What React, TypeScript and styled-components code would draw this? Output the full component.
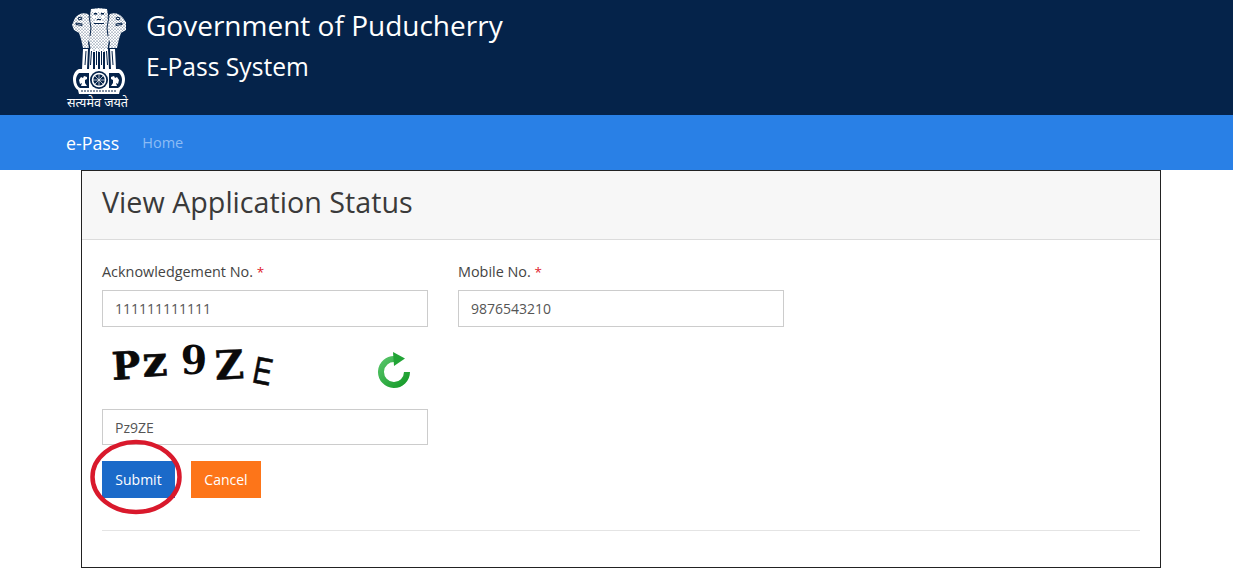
import React from "react";
import styled, { createGlobalStyle } from "styled-components";

const Global = createGlobalStyle`
  html, body { margin: 0; padding: 0; background: #fff; overflow: hidden; }
  body { font-family: "Open Sans", "Noto Sans", "Liberation Sans", sans-serif; color: #333; }
  * { box-sizing: border-box; }
`;

const Masthead = styled.header`
  height: 115px;
  background: #05234a;
  display: flex;
  padding-left: 66px;
  gap: 17px;
  color: #fff;
`;
const Emblem = styled.div`
  width: 63px;
  display: flex;
  flex-direction: column;
  align-items: center;
  padding-top: 7px;
`;
const EmblemSvg = styled.svg`
  margin-left: 3px;
  flex: none;
`;
const Motto = styled.span`
  font-family: "Noto Sans Devanagari", "Noto Sans", "DejaVu Sans", sans-serif;
  font-size: 12.6px;
  line-height: 14px;
  white-space: nowrap;
  color: #fff;
  font-weight: 400;
`;
const Titles = styled.div`
  display: flex;
  flex-direction: column;
  padding-top: 6px;
`;
const Title = styled.h1`
  margin: 0;
  font-size: 28px;
  line-height: 38px;
  font-weight: 400;
`;
const Subtitle = styled.h2`
  margin: 7px 0 0;
  font-size: 24.6px;
  line-height: 32px;
  font-weight: 400;
`;
const NavBar = styled.nav`
  height: 55px;
  background: #2980e6;
  display: flex;
  align-items: center;
  padding-left: 66px;
  gap: 23px;
`;
const Brand = styled.span`
  font-size: 17.8px;
  color: #fff;
`;
const NavLink = styled.span`
  font-size: 14.5px;
  margin-top: -1px;
  color: #8cbcf5;
`;
const Card = styled.section`
  position: relative;
  width: 1080px;
  height: 398px;
  margin-left: 81px;
  border: 1px solid #222;
`;
const CardHeader = styled.div`
  height: 69px;
  background: #f7f7f7;
  border-bottom: 1px solid #dcdcdc;
  padding: 0 20px;
  display: flex;
  align-items: center;
`;
const CardTitle = styled.h3`
  margin: 0 0 7px;
  font-size: 28.7px;
  font-weight: 400;
  color: #3a3a3a;
`;
const CardBody = styled.div`
  padding: 21px 20px 0;
`;
const FieldRow = styled.div`
  display: flex;
  gap: 30px;
`;
const Field = styled.div`
  width: 326px;
  display: flex;
  flex-direction: column;
`;
const Label = styled.label`
  font-size: 14.4px;
  line-height: 22px;
  height: 29px;
  color: #444;
`;
const Star = styled.span`
  color: #e0202c;
  font-size: 13.5px;
`;
const Input = styled.div<{ $h?: number }>`
  height: ${(p) => p.$h ?? 37}px;
  width: 326px;
  border: 1px solid #ccc;
  padding: 0 12px;
  font-size: 14px;
  line-height: 35px;
  color: #555;
`;
const CaptchaRow = styled.div`
  width: 326px;
  height: 82px;
  display: flex;
  justify-content: space-between;
  align-items: flex-start;
  padding: 16px 18px 0 10px;
`;
const Captcha = styled.div`
  width: 180px;
  height: 48px;
  display: flex;
  color: #0a0a0a;
  font-family: "DejaVu Serif", "Liberation Serif", serif;
  font-weight: 700;
`;
const CaptchaChar = styled.span<{ $size: number; $top: number; $left: number; $rot: number; $sx?: number; $plain?: boolean; $stroke?: number }>`
  display: block;
  font-size: ${(p) => p.$size}px;
  line-height: 1;
  margin-top: ${(p) => p.$top}px;
  margin-left: ${(p) => p.$left}px;
  transform: rotate(${(p) => p.$rot}deg) scaleX(${(p) => p.$sx ?? 1});
  -webkit-text-stroke: ${(p) => p.$stroke ?? 0}px #0a0a0a;
  ${(p) => (p.$plain ? `font-family: "Liberation Sans", sans-serif; font-weight: 400;` : "")}
`;
const RefreshSvg = styled.svg`
  margin-top: 9px;
  flex: none;
`;
const Buttons = styled.div`
  display: flex;
  gap: 16px;
  margin-top: 16px;
`;
const Button = styled.button<{ $bg: string; $w: number }>`
  height: 37px;
  width: ${(p) => p.$w}px;
  padding: 0;
  border: 0;
  border-radius: 0;
  background: ${(p) => p.$bg};
  color: #fff;
  font: inherit;
  font-size: 14px;
`;
const Rule = styled.hr`
  margin: 32px 0 0;
  border: 0;
  border-top: 1px solid #e4e4e4;
`;
const Circle = styled.svg`
  position: absolute;
  left: 5px;
  top: 267px;
`;

const EmblemArt = () => (
  <EmblemSvg width="54" height="90" viewBox="0 0 54 90" fill="none">
    <defs>
      <pattern id="mane" width="3" height="3" patternUnits="userSpaceOnUse">
        <rect width="3" height="3" fill="#fff" />
        <circle cx="1" cy="1" r=".55" fill="#05234a" />
        <circle cx="2.500" cy="2.400" r=".4" fill="#05234a" />
      </pattern>
    </defs>
    <path d="M3 11c3-4 8-6 13-4l3 5 1 9-2 8-2 7 1 5H11l-2-9-2-6-5-3-2-5z" fill="url(#mane)" />
    <path d="M51 11c-3-4-8-6-13-4l-3 5-1 9 2 8 2 7-1 5h8l2-9 2-6 5-3 2-5z" fill="url(#mane)" />
    <path d="M19 2l8-1 8 1 1 6-1 6 2 5-1 6 1 8-2 12H19l-2-12 1-8-1-6 2-5-1-6z" fill="url(#mane)" />
    <path d="M20 2h14l1 3H19zM21 9h4v2h-4zM29 9h4v2h-4zM23 14h8v2h-8z" fill="#fff" />
    <path d="M22 6h3v1.500h-3zM29 6h3v1.500h-3zM25 12h4v1h-4zM22 16h10v1H22z" fill="#05234a" />
    <path d="M6 11l3-1 1 2-3 1zM48 11l-3-1-1 2 3 1zM4 16l6 1v1.500l-6-1zM50 16l-6 1v1.500l6-1zM17 9l2 12-1 8M37 9l-2 12 1 8" stroke="#05234a" strokeWidth="1" />
    <g fill="#fff">
      <path d="M11 42h5l-1 20h-5zM18 42h3v20h-4zM23 42h3v20h-3zM28 42h3v20h-3zM33 42h3l1 20h-4zM38 42h5l1 20h-5z" />
    </g>
    <path d="M14 44l-1 14M19.500 44l-1 14M24.500 44v14M29.500 44v14M34.500 44l1 14M40 44l1 14" stroke="#05234a" strokeWidth="1" />
    <path d="M7 62h40c3 1 6 5 6 10s-2 9-5 11l-1 4H7l-1-4c-3-2-5-6-5-11s3-9 6-10z" fill="#fff" />
    <path d="M7 66c-2 2-3 4-3 7 0 4 2 7 4 8h9V66zM47 66c2 2 3 4 3 7 0 4-2 7-4 8h-9V66z" fill="#05234a" />
    <path d="M7 73l2-3 2 1 1-2 3 1v2l-2 1v3l2 3H9l1-3-2 1zM47 73l-2-3-2 1-1-2-3 1v2l2 1v3l-2 3h6l-1-3 2 1z" fill="#fff" />
    <circle cx="27" cy="73" r="9" fill="#05234a" />
    <circle cx="27" cy="73" r="6.500" stroke="#fff" strokeWidth="1.500" />
    <path d="M27 66v14M20 73h14M22 68l10 10M32 68L22 78" stroke="#fff" strokeWidth=".7" />
    <path d="M9 84h36" stroke="#05234a" strokeWidth="1" strokeDasharray="2 1" />
  </EmblemSvg>
);

const Refresh = () => (
  <RefreshSvg width="32" height="36" viewBox="0 0 32 36" fill="none">
    <defs>
      <linearGradient id="g" x1="0" y1="0" x2="1" y2="1">
        <stop offset="0" stopColor="#56c468" />
        <stop offset="1" stopColor="#159a28" />
      </linearGradient>
    </defs>
    <path d="M17 7A13 13 0 1 0 29 20" stroke="url(#g)" strokeWidth="6" />
    <path d="M15 0l12 6.500L16 14z" fill="#22a436" />
  </RefreshSvg>
);

export default function App() {
  return (
    <>
      <Global />
      <Masthead>
        <Emblem>
          <EmblemArt />
          <Motto>सत्यमेव जयते</Motto>
        </Emblem>
        <Titles>
          <Title>Government of Puducherry</Title>
          <Subtitle>E-Pass System</Subtitle>
        </Titles>
      </Masthead>
      <NavBar>
        <Brand>e-Pass</Brand>
        <NavLink>Home</NavLink>
      </NavBar>
      <Card>
        <CardHeader>
          <CardTitle>View Application Status</CardTitle>
        </CardHeader>
        <CardBody>
          <FieldRow>
            <Field>
              <Label>Acknowledgement No. <Star>*</Star></Label>
              <Input>111111111111</Input>
            </Field>
            <Field>
              <Label>Mobile No. <Star>*</Star></Label>
              <Input>9876543210</Input>
            </Field>
          </FieldRow>
          <CaptchaRow>
            <Captcha>
              <CaptchaChar $size={38} $top={4} $left={0} $rot={-3} $stroke={0.6}>P</CaptchaChar>
              <CaptchaChar $size={42} $top={-2} $left={2} $rot={-3} $stroke={0.6} $sx={1.05}>z</CaptchaChar>
              <CaptchaChar $size={40} $top={-3} $left={14} $rot={0} $sx={0.95}>9</CaptchaChar>
              <CaptchaChar $size={40} $top={2} $left={7} $rot={-3} $stroke={0.4}>Z</CaptchaChar>
              <CaptchaChar $size={38} $top={9} $left={6} $rot={11} $sx={0.75} $stroke={0.6} $plain>E</CaptchaChar>
            </Captcha>
            <Refresh />
          </CaptchaRow>
          <Input $h={36}>Pz9ZE</Input>
          <Buttons>
            <Button $bg="#1b6ac9" $w={73}>Submit</Button>
            <Button $bg="#fd7519" $w={70}>Cancel</Button>
          </Buttons>
          <Rule />
        </CardBody>
        <Circle width="98" height="80" viewBox="0 0 98 80" fill="none">
          <ellipse cx="49" cy="39" rx="43.500" ry="35" stroke="#d9192c" strokeWidth="4.500" />
        </Circle>
      </Card>
    </>
  );
}
